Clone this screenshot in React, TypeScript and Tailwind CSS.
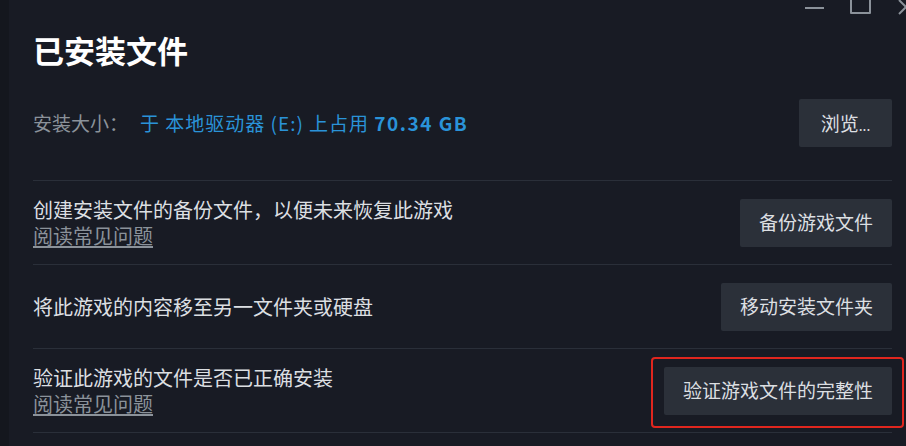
const font = { fontFamily: '"Noto Sans CJK SC", "Noto Sans", sans-serif' }

type Row = { text: string; faq?: boolean; button: string; highlight?: boolean }

const rows: Row[] = [
  { text: "创建安装文件的备份文件，以便未来恢复此游戏", faq: true, button: "备份游戏文件" },
  { text: "将此游戏的内容移至另一文件夹或硬盘", button: "移动安装文件夹" },
  { text: "验证此游戏的文件是否已正确安装", faq: true, button: "验证游戏文件的完整性", highlight: true },
]

function WindowControls() {
  return (
    <div className="absolute top-0 right-0 flex items-start">
      <div className="mt-[7px] mr-[26px] h-[2px] w-[19px] bg-[#8b929a]" />
      <div className="-mt-[2px] mr-[27px] h-[16px] w-[21px] border-2 border-[#8b929a] rounded-[1px]" />
      <svg width="8" height="16" viewBox="0 0 8 16">
        <path d="M1 0 L8 7" stroke="#8b929a" strokeWidth="2" fill="none" />
        <path d="M1 14 L8 7" stroke="#8b929a" strokeWidth="2" fill="none" />
      </svg>
    </div>
  )
}

function ActionButton({ label, highlight }: { label: string; highlight?: boolean }) {
  return (
    <div className="relative">
      {highlight && (
        <span className="pointer-events-none absolute -left-[13px] -right-[12px] -top-[10px] -bottom-[13px] rounded-[4px] border-2 border-[#e0261e]" />
      )}
      <button className="h-[48px] px-[19px] bg-[#2b3039] text-[19px] text-[#dcdfe2] rounded-[2px]">
        {label}
      </button>
    </div>
  )
}

export default function App() {
  return (
    <div className="relative flex h-[446px] w-[906px] overflow-hidden bg-[#181b24]" style={font}>
      <div className="w-[9px] shrink-0 bg-[#14171e]" />
      <WindowControls />
      <div className="flex-1 pl-[24px] pr-[14px]">
        {/* Header */}
        <h1 className="mt-[31px] text-[31px] leading-[38px] font-bold text-white">已安装文件</h1>

        {/* Install size */}
        <div className="mt-[30px] mb-[33px] flex h-[48px] items-center justify-between">
          <div className="flex items-center text-[19px]">
            <span className="w-[107px] text-[#8b929a]">安装大小：</span>
            <span className="tracking-[1px] text-[#2a93d8]">
              于 本地驱动器 (E:) 上占用 <span className="font-bold tracking-[1.5px]">70.34 GB</span>
            </span>
          </div>
          <button className="h-[48px] w-[93px] bg-[#2b3039] text-[19px] text-[#dcdfe2] rounded-[2px]">
            浏览<span className="text-[14px]">...</span>
          </button>
        </div>

        {/* Actions */}
        <div className="border-b border-[#2a2f39]">
          {rows.map((row) => (
            <div
              key={row.button}
              className="flex h-[84px] items-center justify-between border-t border-[#2a2f39]"
            >
              <div className="flex flex-col">
                <span className="text-[20px] leading-[26px] text-[#dcdfe2]">{row.text}</span>
                {row.faq && (
                  <span className="text-[20px] leading-[26px] text-[#8b929a] underline underline-offset-2">
                    阅读常见问题
                  </span>
                )}
              </div>
              <ActionButton label={row.button} highlight={row.highlight} />
            </div>
          ))}
        </div>
      </div>
    </div>
  )
}
